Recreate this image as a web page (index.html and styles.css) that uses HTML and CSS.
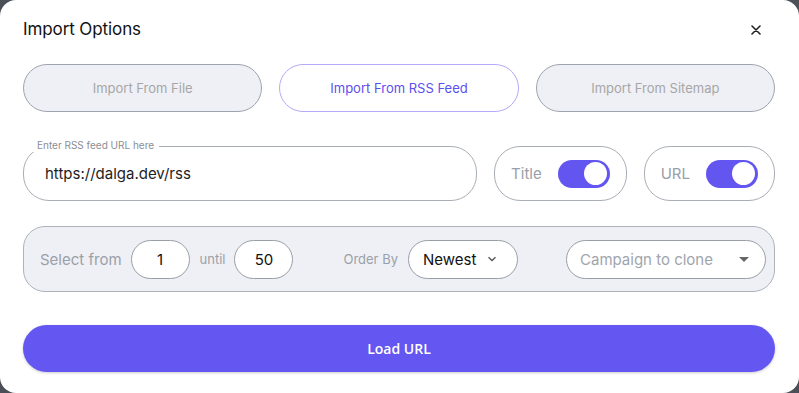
FILE: index.html
```html
<!DOCTYPE html>
<html lang="en">

<head>
    <meta charset="UTF-8">
    <meta name="viewport" content="width=device-width, initial-scale=1.0">
    <title>Import Options</title>
    <link rel="stylesheet" href="styles.css">
</head>

<body>

    <div class="modal">
        <div class="modal-header">
            <h1>Import Options</h1>
            <button class="close-button" aria-label="Close">
                <svg width="10" height="10" viewBox="0 0 10 10"><path d="M1 1 L9 9 M9 1 L1 9" stroke="#222" stroke-width="1.6" stroke-linecap="round"/></svg>
            </button>
        </div>

        <div class="tabs">
            <button class="tab">Import From File</button>
            <button class="tab active">Import From RSS Feed</button>
            <button class="tab">Import From Sitemap</button>
        </div>

        <div class="url-row">
            <div class="url-field">
                <label for="rss-url">Enter RSS feed URL here</label>
                <input type="text" id="rss-url" value="https://dalga.dev/rss">
            </div>
            <div class="switch-box">
                <span>Title</span>
                <span class="switch"><span class="knob"></span></span>
            </div>
            <div class="switch-box">
                <span>URL</span>
                <span class="switch"><span class="knob"></span></span>
            </div>
        </div>

        <div class="filter-panel">
            <span class="label-big">Select from</span>
            <input class="num-input" type="text" value="1">
            <span class="label-small">until</span>
            <input class="num-input" type="text" value="50">
            <span class="label-small order-label">Order By</span>
            <div class="select order-select">
                <span>Newest</span>
                <svg width="10" height="6" viewBox="0 0 10 6"><path d="M1.5 1.2 L5 4.5 L8.5 1.2" fill="none" stroke="#555" stroke-width="1.3"/></svg>
            </div>
            <div class="select campaign-select">
                <span>Campaign to clone</span>
                <svg width="10" height="5" viewBox="0 0 10 5"><path d="M0 0 L10 0 L5 5 Z" fill="#666"/></svg>
            </div>
        </div>

        <button class="load-button">Load URL</button>
    </div>

</body>

</html>
```

FILE: styles.css
```css
body {
    margin: 0;
    background: #4b4f57;
    font-family: Inter, "Noto Sans", sans-serif;
}

.modal {
    width: 799px;
    height: 393px;
    box-sizing: border-box;
    background: #fff;
    border-radius: 16px;
    padding: 14px 24px 0 23px;
}

.modal-header {
    display: flex;
    align-items: center;
    justify-content: space-between;
    height: 30px;
}

h1 {
    margin: 0;
    font-size: 17px;
    font-weight: 400;
    color: #111;
    letter-spacing: -0.1px;
}

.close-button {
    border: none;
    background: none;
    padding: 0;
    width: 14px;
    height: 14px;
    margin-right: 12px;
    margin-top: 2px;
    display: flex;
    align-items: center;
    justify-content: center;
}

.tabs {
    display: flex;
    gap: 17px;
    margin-top: 20px;
}

.tab {
    flex: 1;
    height: 48px;
    border-radius: 24px;
    border: 1px solid #9ea4ae;
    background: #eff0f5;
    color: #a6a6a6;
    font-family: inherit;
    font-size: 13px;
}

.tab.active {
    background: #fff;
    border-color: #b3aaf7;
    color: #5b4ff0;
}

.url-row {
    display: flex;
    gap: 17px;
    margin-top: 34px;
}

.url-field {
    position: relative;
    flex: 1;
    height: 55px;
    box-sizing: border-box;
    border: 1px solid #a9aeb6;
    border-radius: 26px;
    display: flex;
    align-items: center;
}

.url-field label {
    position: absolute;
    top: -8px;
    left: 9px;
    padding: 0 5px 0 4px;
    background: #fff;
    font-size: 10px;
    line-height: 13px;
    color: #8a8e96;
}

.url-field input {
    border: none;
    outline: none;
    background: none;
    width: 100%;
    margin-left: 19px;
    font-family: inherit;
    font-size: 15px;
    color: #1d1d1f;
}

.switch-box {
    height: 55px;
    box-sizing: border-box;
    border: 1px solid #a9aeb6;
    border-radius: 26px;
    display: flex;
    align-items: center;
    gap: 16px;
    padding: 0 16px;
    font-size: 15px;
    color: #9aa0a9;
}

.switch-box:first-of-type {
    width: 134px;
}

.switch {
    width: 52px;
    height: 28px;
    border-radius: 14px;
    background: #6356f0;
    display: flex;
    align-items: center;
    justify-content: flex-end;
    padding-right: 3px;
    box-sizing: border-box;
}

.knob {
    width: 23px;
    height: 23px;
    border-radius: 50%;
    background: #fff;
}

.filter-panel {
    margin-top: 25px;
    height: 66px;
    box-sizing: border-box;
    border: 1px solid #adb2bb;
    border-radius: 22px;
    background: #eff0f5;
    display: flex;
    align-items: center;
    padding: 0 8px 0 16px;
}

.label-big {
    font-size: 15px;
    color: #9aa0a9;
    margin-right: 9px;
}

.label-small {
    font-size: 13px;
    color: #9aa0a9;
    margin: 0 9px 0 10px;
}

.num-input {
    width: 59px;
    height: 39px;
    box-sizing: border-box;
    border: 1px solid #9a9ea6;
    border-radius: 20px;
    background: #fff;
    text-align: center;
    font-family: inherit;
    font-size: 15px;
    color: #111;
    outline: none;
}

.order-label {
    margin-left: 50px;
    margin-right: 10px;
}

.select {
    height: 39px;
    box-sizing: border-box;
    border: 1px solid #9a9ea6;
    border-radius: 20px;
    background: #fff;
    display: flex;
    align-items: center;
    justify-content: space-between;
    font-size: 15px;
}

.order-select {
    width: 110px;
    padding: 0 20px 0 14px;
    color: #111;
}

.campaign-select {
    width: 200px;
    margin-left: auto;
    padding: 0 16px 0 13px;
    color: #a0a5ad;
}

.load-button {
    display: block;
    width: 100%;
    height: 47px;
    margin-top: 33px;
    border: none;
    border-radius: 24px;
    background: #6456f1;
    color: #fff;
    font-family: "Open Sans", sans-serif;
    font-size: 14px;
    font-weight: 600;
    box-shadow: 0 1px 3px rgba(0, 0, 0, 0.2);
}
```
